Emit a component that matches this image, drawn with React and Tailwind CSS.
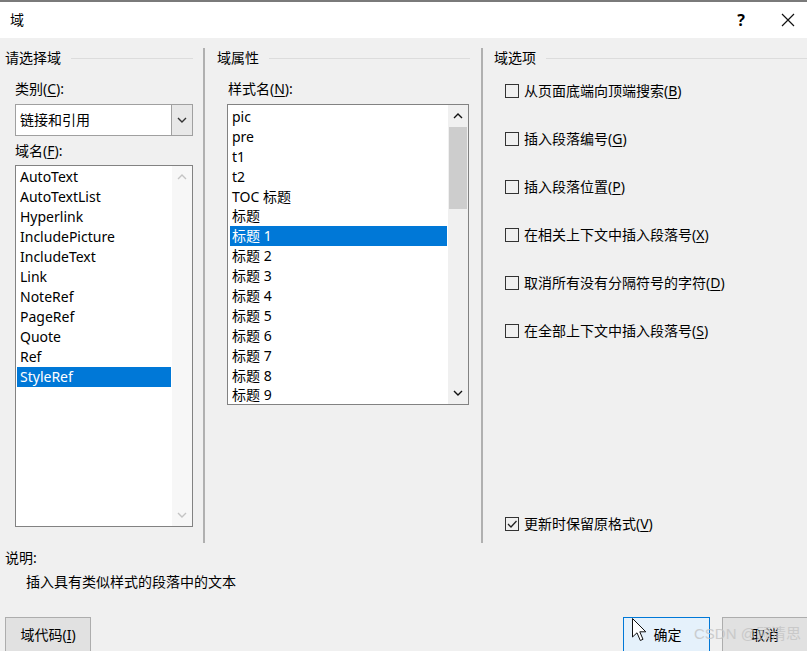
import React from "react";

const Chevron = ({ dir = "down", color = "#000" }) => (
  <svg width="10" height="6" viewBox="0 0 10 6">
    <path
      d={dir === "down" ? "M1 1L5 5L9 1" : "M1 5L5 1L9 5"}
      stroke={color}
      strokeWidth="1.4"
      fill="none"
    />
  </svg>
);

const Acc = ({ children }) => <span className="underline underline-offset-2">{children}</span>;

const Heading = ({ text, pl, mr }) => (
  <div className={`flex items-center h-[20px] ${pl} ${mr}`}>
    <span>{text}</span>
    <div className="flex-1 ml-[10px] h-px bg-[#dcdcdc]" />
  </div>
);

const Checkbox = ({ checked, label }) => (
  <div className="flex items-center h-[20px]">
    <div className="shrink-0 w-[14px] h-[14px] border border-[#333333] bg-transparent flex items-center justify-center">
      {checked && (
        <svg width="12" height="12" viewBox="0 0 12 12">
          <path d="M2 6L5 9L10.5 3" stroke="#222" strokeWidth="1.3" fill="none" />
        </svg>
      )}
    </div>
    <span className="ml-[5px] whitespace-nowrap">{label}</span>
  </div>
);

const list1 = [
  "AutoText",
  "AutoTextList",
  "Hyperlink",
  "IncludePicture",
  "IncludeText",
  "Link",
  "NoteRef",
  "PageRef",
  "Quote",
  "Ref",
  "StyleRef",
];

const list2 = [
  "pic",
  "pre",
  "t1",
  "t2",
  "TOC 标题",
  "标题",
  "标题 1",
  "标题 2",
  "标题 3",
  "标题 4",
  "标题 5",
  "标题 6",
  "标题 7",
  "标题 8",
  "标题 9",
];

export default function App() {
  return (
    <div className="relative w-[807px] h-[651px] overflow-hidden bg-[#f0f0f0] text-[14px] leading-[20px] text-[#000] font-['Noto_Sans','Noto_Sans_CJK_SC',sans-serif]">
      {/* title bar */}
      <div className="h-[2px] bg-[#7a7a7a]" />
      <div className="h-[36px] bg-white flex items-center">
        <span className="ml-[10px] -mt-[1px]">域</span>
        <span className="ml-auto mr-[36px] text-[16px] font-bold -mt-[1px]">?</span>
        <svg width="14" height="14" viewBox="0 0 14 14" className="mr-[12px] -mt-[1px]">
          <path d="M1 1L13 13M13 1L1 13" stroke="#111" strokeWidth="1.2" />
        </svg>
      </div>

      {/* columns */}
      <div className="flex pt-[10px]">
        {/* column 1 */}
        <div className="w-[203px] h-[495px] flex flex-col">
          <Heading text="请选择域" pl="pl-[5px]" mr="mr-[10px]" />
          <div className="pl-[15px] mt-[11px]">
            类别(<Acc>C</Acc>):
          </div>
          <div className="ml-[15px] mt-[5px] w-[178px] h-[32px] border border-[#a0a0a0] bg-white flex">
            <div className="flex-1 pl-[4px] flex items-center">链接和引用</div>
            <div className="w-[21px] h-full bg-[#e8e8e8] border-l border-[#a0a0a0] flex items-center justify-center">
              <Chevron dir="down" color="#333" />
            </div>
          </div>
          <div className="pl-[15px] mt-[5px]">
            域名(<Acc>F</Acc>):
          </div>
          <div className="ml-[15px] mt-[4px] w-[178px] h-[362px] border border-[#828282] bg-white flex">
            <div className="flex-1 p-[1px]">
              {list1.map((t, i) => (
                <div
                  key={t}
                  className={`h-[20px] pl-[3px] flex items-center ${
                    i === 10 ? "bg-[#0078d7] text-white" : ""
                  }`}
                >
                  {t}
                </div>
              ))}
            </div>
            <div className="w-[20px] h-full bg-[#f7f7f7] flex flex-col items-center justify-between py-[8px]">
              <Chevron dir="up" color="#c4c4c4" />
              <Chevron dir="down" color="#c4c4c4" />
            </div>
          </div>
        </div>
        <div className="w-[2px] h-[495px] bg-[#b0b0b0]" />

        {/* column 2 */}
        <div className="w-[276px] h-[495px] flex flex-col">
          <Heading text="域属性" pl="pl-[12px]" mr="mr-[11px]" />
          <div className="pl-[23px] mt-[11px]">
            样式名(<Acc>N</Acc>):
          </div>
          <div className="ml-[22px] mt-[5px] w-[242px] h-[301px] border border-[#828282] bg-white flex overflow-hidden">
            <div className="flex-1 pl-[2px] pr-[1px] pt-[2px]">
              {list2.map((t, i) => (
                <div
                  key={t}
                  className={`h-[19.9px] pl-[2px] flex items-center whitespace-nowrap ${
                    i === 6 ? "bg-[#0078d7] text-white" : ""
                  }`}
                >
                  {t}
                </div>
              ))}
            </div>
            <div className="w-[20px] h-full bg-[#f0f0f0] flex flex-col items-center">
              <div className="h-[22px] flex items-center justify-center">
                <Chevron dir="up" color="#111" />
              </div>
              <div className="w-[18px] h-[82px] bg-[#cdcdcd]" />
              <div className="mt-auto h-[22px] flex items-center justify-center">
                <Chevron dir="down" color="#111" />
              </div>
            </div>
          </div>
        </div>
        <div className="w-[2px] h-[495px] bg-[#b0b0b0]" />

        {/* column 3 */}
        <div className="flex-1 h-[495px] flex flex-col">
          <Heading text="域选项" pl="pl-[11px]" mr="mr-0" />
          <div className="pl-[22px] mt-[13px] flex flex-col gap-[28px]">
            <Checkbox label={<>从页面底端向顶端搜索(<Acc>B</Acc>)</>} />
            <Checkbox label={<>插入段落编号(<Acc>G</Acc>)</>} />
            <Checkbox label={<>插入段落位置(<Acc>P</Acc>)</>} />
            <Checkbox label={<>在相关上下文中插入段落号(<Acc>X</Acc>)</>} />
            <Checkbox label={<>取消所有没有分隔符号的字符(<Acc>D</Acc>)</>} />
            <Checkbox label={<>在全部上下文中插入段落号(<Acc>S</Acc>)</>} />
          </div>
          <div className="pl-[22px] mt-auto mb-[9px]">
            <Checkbox checked label={<>更新时保留原格式(<Acc>V</Acc>)</>} />
          </div>
        </div>
      </div>

      {/* description */}
      <div className="pl-[5px] mt-[5px]">说明:</div>
      <div className="pl-[26px] mt-[4px]">插入具有类似样式的段落中的文本</div>

      {/* buttons */}
      <div className="flex mt-[25px]">
        <div className="ml-[5px] w-[86px] h-[36px] bg-[#e1e1e1] border border-[#adadad] flex items-center justify-center">
          域代码(<Acc>I</Acc>)
        </div>
        <div className="ml-auto w-[87px] h-[36px] bg-[#e5f1fb] border border-[#0078d7] flex items-center justify-center">
          <span className="ml-[2px]">确定</span>
        </div>
        <div className="ml-[12px] -mr-[1px] w-[86px] h-[36px] bg-[#e1e1e1] border border-[#adadad] flex items-center justify-center">
          取消
        </div>
      </div>

      {/* watermark */}
      <div className="absolute left-[694px] top-[624px] text-[15px] leading-[20px] text-[#c4c4c4] opacity-80 whitespace-nowrap font-['Liberation_Sans','Noto_Sans_CJK_SC',sans-serif]">
        CSDN @顾清思
      </div>

      {/* mouse cursor */}
      <svg
        className="absolute left-[632px] top-[618px]"
        width="16"
        height="25"
        viewBox="0 0 16 25"
      >
        <path
          d="M0.5 0.5L0.5 19L5 14.8L8.3 22.5L11 21.3L7.8 13.8L13.8 13.8Z"
          fill="white"
          stroke="#111"
          strokeWidth="1"
          strokeLinejoin="round"
        />
      </svg>
    </div>
  );
}
